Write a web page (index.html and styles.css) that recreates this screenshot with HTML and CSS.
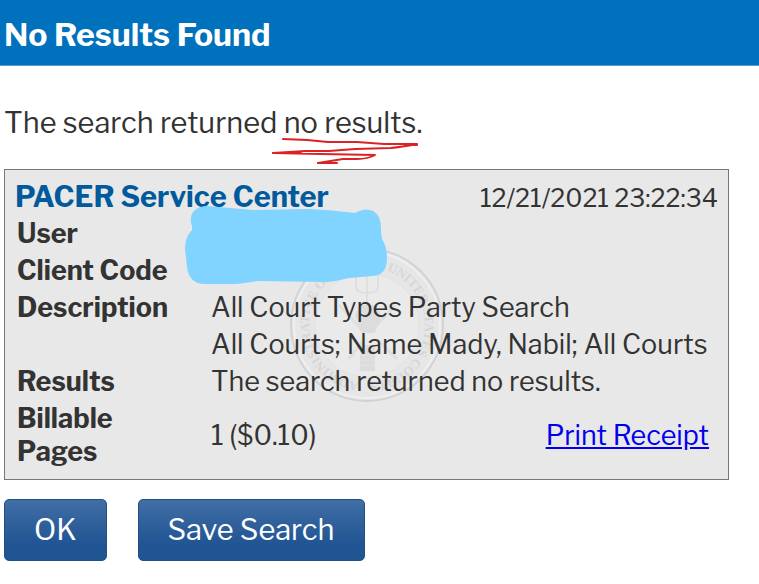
FILE: index.html
```html
<!DOCTYPE html>
<html lang="en">
<head>
    <meta charset="UTF-8">
    <meta name="viewport" content="width=device-width, initial-scale=1.0">
    <title>No Results Found</title>
    <link rel="stylesheet" href="styles.css">
</head>
<body>
    <header class="page-header">
        <h1>No Results Found</h1>
    </header>
    <main class="content">
        <p class="message">The search returned <span class="marked">no results<svg class="scribble" width="148" height="30" viewBox="0 0 148 30" aria-hidden="true">
            <path d="M12 3 L36 4 L57 6 L86 6 L113 8 L146 8 Q130 11 120 12 L84 13 L58 15 L34 15 L2 17 L50 18 L104 19 Q97 23 86 23 L72 23 L47 27 L66 27"/>
            <path d="M136 9 H146 M2 17 H30 M47 27 H62"/>
        </svg></span>.</p>

        <section class="receipt">
            <svg class="seal" width="156" height="156" viewBox="0 0 156 156" aria-hidden="true">
                <circle cx="78" cy="78" r="76" fill="#e6e6e6" stroke="#d2d2d2" stroke-width="2"/>
                <circle cx="78" cy="78" r="73" fill="none" stroke="#efefef" stroke-width="2"/>
                <circle cx="78" cy="78" r="52" fill="#eaeaea" stroke="#e3e3e3"/>
                <path id="ring" d="M78 136 A58 58 0 0 1 78 20 A58 58 0 0 1 78 136" fill="none"/>
                <text class="seal-text"><textPath href="#ring" startOffset="8">ADMINISTRATIVE OFFICE</textPath></text>
                <text class="seal-text"><textPath href="#ring" startOffset="202">UNITED STATES COURTS</textPath></text>
                <g fill="none" stroke="#dfdfdf" stroke-width="2">
                    <path d="M78 26 V62 M67 28 V40 Q67 46 78 46 Q89 46 89 40 V28"/>
                    <path d="M50 58 L72 82 M106 58 L84 82 M60 112 L74 94 M88 92 L108 112" stroke-width="3"/>
                </g>
                <path d="M71 58 H87 L92 68 L86 86 H72 L66 68 Z M71 98 H86 V124 H71 Z" fill="#dcdcdc"/>
                <path d="M71 103 H86 M71 108 H86 M71 113 H86 M71 118 H86" stroke="#e3e3e3"/>
            </svg>
            <div class="receipt-head">
                <h2>PACER Service Center</h2>
                <time datetime="2021-12-21T23:22:34">12/21/2021 23:22:34</time>
            </div>
            <table class="details">
                <tr><th scope="row">User</th><td></td></tr>
                <tr><th scope="row">Client Code</th><td></td></tr>
                <tr><th scope="row">Description</th><td>All Court Types Party Search</td></tr>
                <tr><th></th><td>All Courts; Name Mady, Nabil; All Courts</td></tr>
                <tr><th scope="row">Results</th><td>The search returned no results.</td></tr>
                <tr>
                    <th scope="row">Billable Pages</th>
                    <td><div class="pages"><span>1 ($0.10)</span><a href="#">Print Receipt</a></div></td>
                </tr>
            </table>
            <svg class="redaction" width="202" height="80" viewBox="0 0 202 80" aria-hidden="true">
                <path d="M7 21 Q4 13 8 7 Q13 1 22 1 L68 5 L125 4 Q148 5 170 8 Q180 2 188 6 Q196 10 196 24 Q196 32 198 36 Q202 42 202 53 Q202 70 188 71 L164 73 Q152 76 142 77 L72 76 Q54 79 46 79 L20 79 Q4 79 2 62 L0 44 Q0 32 7 25 Z"/>
            </svg>
        </section>

        <div class="actions">
            <button type="button">OK</button>
            <button type="button">Save Search</button>
        </div>
    </main>
</body>
</html>
```
FILE: styles.css
```css
body {
    margin: 0;
    font-family: "Libre Franklin", Inter, "Liberation Sans", sans-serif;
    font-size: 27px;
    line-height: 33px;
    color: #333;
    background-color: #fff;
}
.page-header {
    background-color: #0071bc;
    border-bottom: 1px solid #5d9fce;
    padding: 18px 4px 14px;
}
h1, h2, p {
    margin: 0;
}
h1 {
    font-size: 32px;
    line-height: 33px;
    font-weight: bold;
    color: #fff;
}
.content {
    padding: 39px 30px 20px 4px;
}
.message {
    font-size: 29px;
    line-height: 36px;
    padding-bottom: 28px;
}
.marked {
    position: relative;
}
.scribble {
    position: absolute;
    left: -13px;
    top: 31px;
    fill: none;
    stroke: #dd2226;
    stroke-width: 2;
    stroke-linecap: round;
    stroke-linejoin: round;
}
.receipt {
    position: relative;
    background-color: #e8e8e8;
    border: 1px solid #777;
    padding: 10px 10px 9px;
}
.seal {
    position: absolute;
    left: 284px;
    top: 77px;
}
.seal-text {
    font-family: "Liberation Serif", serif;
    font-size: 13px;
    font-weight: bold;
    fill: #d6d6d6;
}
.receipt-head {
    position: relative;
    display: flex;
    align-items: baseline;
    justify-content: space-between;
}
h2 {
    font-size: 29px;
    line-height: 33px;
    font-weight: bold;
    color: #005a9c;
}
time {
    font-size: 25px;
}
.details {
    position: relative;
    width: 100%;
    border-collapse: collapse;
}
.details th,
.details td {
    height: 33px;
    padding: 2px;
    text-align: left;
}
.details th {
    width: 150px;
    padding-right: 41px;
    font-weight: bold;
}
.details td {
    white-space: nowrap;
}
.pages {
    display: flex;
    justify-content: space-between;
    padding-right: 7px;
}
a {
    color: #00e;
}
.redaction {
    position: absolute;
    left: 180px;
    top: 35px;
    fill: #80d4ff;
}
.actions {
    display: flex;
    gap: 31px;
    padding-top: 19px;
}
button {
    font: inherit;
    font-size: 29px;
    line-height: 36px;
    color: #fff;
    background: linear-gradient(#416ea5, #205493 75%);
    border: 1px solid #205081;
    border-radius: 5px;
    padding: 12px 29px;
}
```
